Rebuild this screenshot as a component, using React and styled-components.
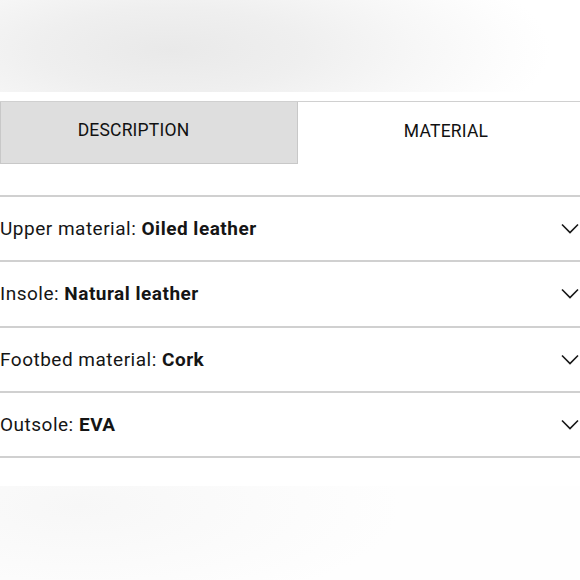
import React, { useState } from "react";
import styled, { createGlobalStyle } from "styled-components";

const GlobalStyle = createGlobalStyle`
  html, body {
    margin: 0;
    padding: 0;
    background: #fff;
    font-family: Roboto, "Liberation Sans", sans-serif;
    color: #1a1a1a;
  }
`;

const rows = [
  { label: "Upper material", value: "Oiled leather" },
  { label: "Insole", value: "Natural leather" },
  { label: "Footbed material", value: "Cork" },
  { label: "Outsole", value: "EVA" },
];

function Chevron() {
  return (
    <svg width="18" height="11" viewBox="0 0 18 11" fill="none">
      <path d="M1 1.5 L9 9.5 L17 1.5" stroke="#161616" strokeWidth="1.6" />
    </svg>
  );
}

function App() {
  const [tab, setTab] = useState("material");

  return (
    <Page>
      <GlobalStyle />
      <BlurTop />
      <TabBar>
        <Tab
          $active={tab === "description"}
          $shift={-31}
          onClick={() => setTab("description")}
        >
          DESCRIPTION
        </Tab>
        <Tab
          $active={tab === "material"}
          $shift={14}
          onClick={() => setTab("material")}
        >
          MATERIAL
        </Tab>
      </TabBar>
      <List>
        {rows.map((r) => (
          <Row key={r.label}>
            <span>
              {r.label}: <strong>{r.value}</strong>
            </span>
            <Chevron />
          </Row>
        ))}
      </List>
      <BlurBottom />
    </Page>
  );
}

const Page = styled.div`
  width: 580px;
  height: 580px;
  overflow: hidden;
  display: flex;
  flex-direction: column;
`;

const BlurTop = styled.div`
  height: 92px;
  flex-shrink: 0;
  background: radial-gradient(
    ellipse 380px 120px at 170px 50px,
    #e9e9e9 0%,
    #efefef 35%,
    #f7f7f7 65%,
    #fdfdfd 90%,
    #ffffff 100%
  );
`;

const TabBar = styled.div`
  margin-top: 9px;
  border-top: 1px solid #d0d0d0;
  display: grid;
  grid-template-columns: 298px 1fr;
  height: 62px;
  flex-shrink: 0;
`;

const Tab = styled.button`
  all: unset;
  cursor: pointer;
  display: flex;
  align-items: center;
  justify-content: center;
  padding-bottom: 5px;
  padding-left: ${(p) => (p.$shift > 0 ? p.$shift : 0)}px;
  padding-right: ${(p) => (p.$shift < 0 ? -p.$shift : 0)}px;
  font-size: 17.5px;
  letter-spacing: 0.2px;
  color: #111;
  box-sizing: border-box;
  background: ${(p) => (p.$active ? "#fff" : "#dedede")};
  border: ${(p) => (p.$active ? "none" : "1px solid #c8c8c8")};
  border-top: none;
`;

const List = styled.div`
  margin-top: 31px;
  border-top: 2px solid #d0d0d0;
  flex-shrink: 0;
`;

const Row = styled.div`
  height: 63.3px;
  border-bottom: 2px solid #d0d0d0;
  display: flex;
  align-items: center;
  justify-content: space-between;
  padding-right: 1px;
  font-size: 19px;
  letter-spacing: 0.5px;
  color: #151515;

  strong {
    font-weight: 700;
  }
`;

const BlurBottom = styled.div`
  margin-top: 28px;
  flex: 1;
  background: radial-gradient(
    ellipse 320px 110px at 80px 20px,
    #f7f7f7 0%,
    #fbfbfb 55%,
    #fefefe 100%
  );
`;

export default App;
